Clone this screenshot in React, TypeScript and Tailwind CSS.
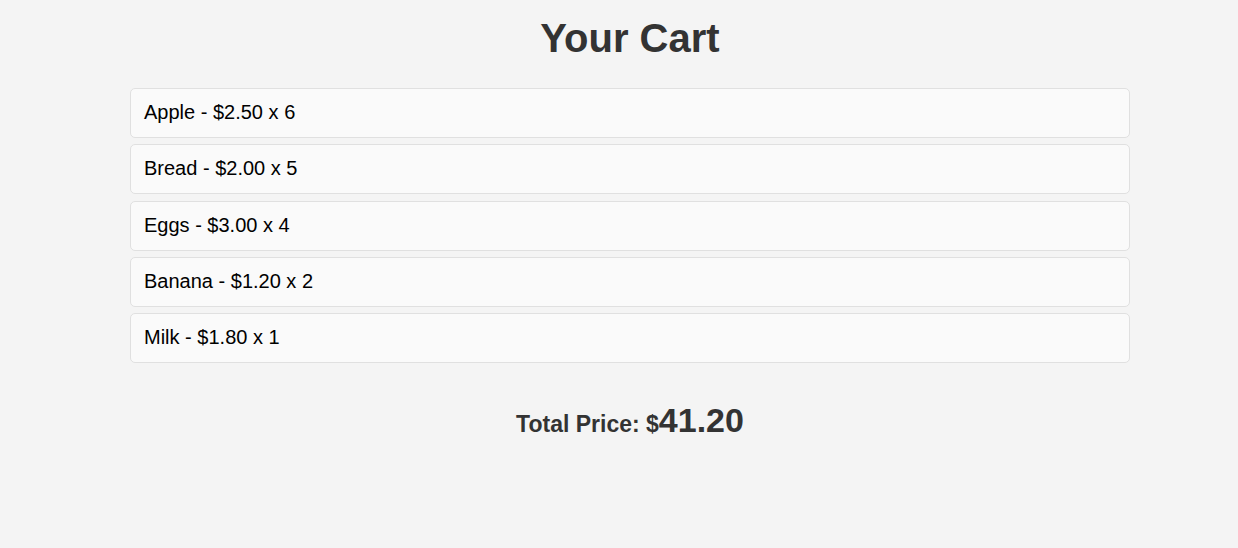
import React from "react";

const items = [
  { name: "Apple", price: 2.5, qty: 6 },
  { name: "Bread", price: 2.0, qty: 5 },
  { name: "Eggs", price: 3.0, qty: 4 },
  { name: "Banana", price: 1.2, qty: 2 },
  { name: "Milk", price: 1.8, qty: 1 },
];

export default function App() {
  const total = items.reduce((s, i) => s + i.price * i.qty, 0);
  return (
    <div
      className="min-h-[548px] w-full bg-[#f4f4f4] pl-[22px] pt-[15px]"
      style={{ fontFamily: '"Liberation Sans", Arial, sans-serif' }}
    >
      <h1 className="text-center text-[40px] font-bold leading-[46px] text-[#333]">
        Your Cart
      </h1>
      <div className="mx-auto mt-[27px] flex w-[1000px] flex-col gap-[6.25px]">
        {items.map((i) => (
          <div
            key={i.name}
            className="h-[50px] rounded-[5px] border border-[#e0e0e0] bg-[#fafafa] px-[13px] pb-[13px] pt-[11px] text-[20px] leading-[24px] text-black"
          >
            {i.name} - ${i.price.toFixed(2)} x {i.qty}
          </div>
        ))}
      </div>
      <div className="mt-[32px] text-center font-bold text-[#333]">
        <span className="text-[23px]">Total Price: $</span>
        <span className="text-[34px]">{total.toFixed(2)}</span>
      </div>
    </div>
  );
}
